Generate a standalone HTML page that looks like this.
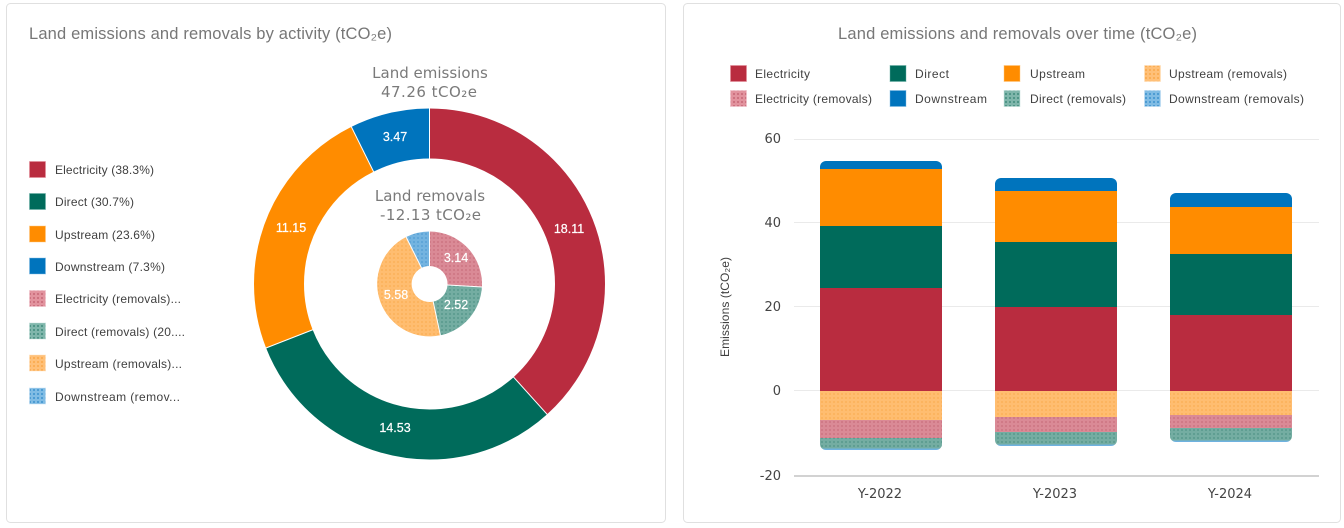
<!DOCTYPE html>
<html>
<head>
<meta charset="utf-8">
<style>
html,body{margin:0;padding:0;background:#fff;width:1344px;height:528px;overflow:hidden}
svg{display:block}
text{font-family:"Liberation Sans","DejaVu Sans",sans-serif}
.t{font-size:16.5px;fill:#777}
.l{font-size:12px;fill:#404040}
.d{font-family:"DejaVu Sans","Liberation Sans",sans-serif;font-size:15px;fill:#7a7a7a;text-anchor:middle}
.a{font-family:"DejaVu Sans","Liberation Sans",sans-serif;font-size:13px;fill:#444}
.w{font-size:12.5px;fill:#fff;text-anchor:middle;stroke:#fff;stroke-width:.2}
</style>
</head>
<body>
<svg width="1344" height="528" viewBox="0 0 1344 528" xmlns="http://www.w3.org/2000/svg">
<defs>
<pattern id="pe" width="4" height="4" patternUnits="userSpaceOnUse"><rect width="4" height="4" fill="#e2939e"/><rect x="1" y="1" width="2" height="2" fill="#cd7280"/></pattern>
<pattern id="pd" width="4" height="4" patternUnits="userSpaceOnUse"><rect width="4" height="4" fill="#7fb6ab"/><rect x="1" y="1" width="2" height="2" fill="#4f9587"/></pattern>
<pattern id="pu" width="4" height="4" patternUnits="userSpaceOnUse"><rect width="4" height="4" fill="#ffc078"/><rect x="1" y="1" width="2" height="2" fill="#fbae55"/></pattern>
<pattern id="pw" width="4" height="4" patternUnits="userSpaceOnUse"><rect width="4" height="4" fill="#80bce4"/><rect x="1" y="1" width="2" height="2" fill="#4d9cd3"/></pattern>
<pattern id="se" width="4" height="4" patternUnits="userSpaceOnUse"><rect width="4" height="4" fill="#da8a96"/><rect x="1" y="1" width="2" height="2" fill="#d07a87"/></pattern>
<pattern id="sd" width="4" height="4" patternUnits="userSpaceOnUse"><rect width="4" height="4" fill="#74ada2"/><rect x="1" y="1" width="2" height="2" fill="#5f9e92"/></pattern>
<pattern id="su" width="4" height="4" patternUnits="userSpaceOnUse"><rect width="4" height="4" fill="#ffbd70"/><rect x="1" y="1" width="2" height="2" fill="#fcb45f"/></pattern>
<pattern id="sw" width="4" height="4" patternUnits="userSpaceOnUse"><rect width="4" height="4" fill="#74b4e0"/><rect x="1" y="1" width="2" height="2" fill="#5fa6d8"/></pattern>
<clipPath id="c1"><rect x="820" y="161" width="122" height="289" rx="6"/></clipPath>
<clipPath id="c2"><rect x="995" y="178" width="122" height="268" rx="6"/></clipPath>
<clipPath id="c3"><rect x="1170" y="193" width="122" height="249" rx="6"/></clipPath>
</defs>

<rect x="6.5" y="3.5" width="659" height="519" rx="4" fill="#fff" stroke="#e0e0e0"/>
<rect x="683.5" y="3.5" width="657" height="519" rx="4" fill="#fff" stroke="#e0e0e0"/>

<text class="t" x="29" y="39" textLength="363" lengthAdjust="spacing">Land emissions and removals by activity (tCO₂e)</text>
<text class="t" x="838" y="39" textLength="359" lengthAdjust="spacing">Land emissions and removals over time (tCO₂e)</text>

<!-- left legend -->
<g stroke-opacity=".45" stroke-width="1">
<rect x="29.5" y="161.5" width="16" height="16" fill="#b92c3f" stroke="#e58a97"/>
<rect x="29.5" y="193.5" width="16" height="16" fill="#006b5b" stroke="#66b0a4"/>
<rect x="29.5" y="226" width="16" height="16" fill="#ff8c00" stroke="#ffc880"/>
<rect x="29.5" y="258" width="16" height="16" fill="#0074bd" stroke="#80bce4"/>
<rect x="29.5" y="290.5" width="16" height="16" fill="url(#pe)" stroke="#f2c4cb"/>
<rect x="29.5" y="323" width="16" height="16" fill="url(#pd)" stroke="#bcdcd5"/>
<rect x="29.5" y="355" width="16" height="16" fill="url(#pu)" stroke="#ffe0bb"/>
<rect x="29.5" y="388" width="16" height="16" fill="url(#pw)" stroke="#bcdcf2"/>
</g>
<text class="l" x="55" y="174" textLength="99">Electricity (38.3%)</text>
<text class="l" x="55" y="206" textLength="79">Direct (30.7%)</text>
<text class="l" x="55" y="239" textLength="100">Upstream (23.6%)</text>
<text class="l" x="55" y="271" textLength="110">Downstream (7.3%)</text>
<text class="l" x="55" y="303" textLength="126">Electricity (removals)...</text>
<text class="l" x="55" y="336" textLength="130">Direct (removals) (20....</text>
<text class="l" x="55" y="368" textLength="127">Upstream (removals)...</text>
<text class="l" x="55" y="401" textLength="125">Downstream (remov...</text>

<!-- outer donut -->
<g fill="none" stroke-width="50" transform="rotate(-90 429.5 284)">
<circle cx="429.5" cy="284" r="150.5" pathLength="47.26" stroke="#b92c3f" stroke-dasharray="18.11 29.15"/>
<circle cx="429.5" cy="284" r="150.5" pathLength="47.26" stroke="#006b5b" stroke-dasharray="14.53 32.73" stroke-dashoffset="-18.11"/>
<circle cx="429.5" cy="284" r="150.5" pathLength="47.26" stroke="#ff8c00" stroke-dasharray="11.15 36.11" stroke-dashoffset="-32.64"/>
<circle cx="429.5" cy="284" r="150.5" pathLength="47.26" stroke="#0074bd" stroke-dasharray="3.47 43.79" stroke-dashoffset="-43.79"/>
</g>
<g stroke="#fff" stroke-width="1">
<line x1="429.5" y1="159" x2="429.5" y2="107"/>
<line x1="513.3" y1="376.8" x2="547.9" y2="415.2"/>
<line x1="313.1" y1="329.6" x2="264.7" y2="348.5"/>
<line x1="373.8" y1="172.1" x2="350.7" y2="125.5"/>
</g>

<!-- inner donut -->
<path d="M429.5 231.5A52.5 52.5 0 0 1 481.9 286.9L447.5 285A18 18 0 0 0 429.5 266Z" fill="url(#se)"/>
<path d="M481.9 286.9A52.5 52.5 0 0 1 440.4 335.3L433.2 301.6A18 18 0 0 0 447.5 285Z" fill="url(#sd)"/>
<path d="M440.4 335.3A52.5 52.5 0 0 1 406.1 237L421.5 267.9A18 18 0 0 0 433.2 301.6Z" fill="url(#su)"/>
<path d="M406.1 237A52.5 52.5 0 0 1 429.5 231.5L429.5 266A18 18 0 0 0 421.5 267.9Z" fill="url(#sw)"/>
<g stroke="#fff" stroke-width="1">
<line x1="429.5" y1="266" x2="429.5" y2="231"/>
<line x1="447.5" y1="285" x2="482.4" y2="287"/>
<line x1="433.2" y1="301.6" x2="440.5" y2="335.8"/>
<line x1="421.5" y1="267.9" x2="405.9" y2="236.6"/>
</g>

<text class="d" x="430" y="78">Land emissions</text>
<text class="d" x="429" y="97" textLength="96">47.26 tCO₂e</text>
<text class="d" x="430" y="201">Land removals</text>
<text class="d" x="430.5" y="220" textLength="101">-12.13 tCO₂e</text>

<text class="w" x="569" y="233">18.11</text>
<text class="w" x="395" y="432">14.53</text>
<text class="w" x="291" y="232">11.15</text>
<text class="w" x="395" y="141">3.47</text>
<text class="w" x="456" y="262">3.14</text>
<text class="w" x="456" y="309">2.52</text>
<text class="w" x="396" y="299">5.58</text>

<!-- right legend -->
<g stroke-opacity=".45">
<rect x="730.5" y="65.5" width="16" height="16" fill="#b92c3f" stroke="#e58a97"/>
<rect x="890" y="65.5" width="16" height="16" fill="#006b5b" stroke="#66b0a4"/>
<rect x="1004" y="65.5" width="16" height="16" fill="#ff8c00" stroke="#ffc880"/>
<rect x="1144.5" y="65.5" width="16" height="16" fill="url(#pu)" stroke="#ffe0bb"/>
<rect x="730.5" y="90.5" width="16" height="16" fill="url(#pe)" stroke="#f2c4cb"/>
<rect x="890" y="90.5" width="16" height="16" fill="#0074bd" stroke="#80bce4"/>
<rect x="1004" y="90.5" width="16" height="16" fill="url(#pd)" stroke="#bcdcd5"/>
<rect x="1144.5" y="90.5" width="16" height="16" fill="url(#pw)" stroke="#bcdcf2"/>
</g>
<text class="l" x="755" y="78" textLength="55">Electricity</text>
<text class="l" x="915" y="78" textLength="34">Direct</text>
<text class="l" x="1030" y="78" textLength="55">Upstream</text>
<text class="l" x="1169" y="78" textLength="118">Upstream (removals)</text>
<text class="l" x="755" y="103" textLength="117">Electricity (removals)</text>
<text class="l" x="915" y="103" textLength="72">Downstream</text>
<text class="l" x="1030" y="103" textLength="96">Direct (removals)</text>
<text class="l" x="1169" y="103" textLength="135">Downstream (removals)</text>

<!-- grid -->
<g stroke="#eaeaea" stroke-width="1">
<line x1="794" y1="139.5" x2="1319" y2="139.5"/>
<line x1="794" y1="222.5" x2="1319" y2="222.5"/>
<line x1="794" y1="306.5" x2="1319" y2="306.5"/>
<line x1="794" y1="390.5" x2="1319" y2="390.5"/>
</g>
<line x1="794" y1="476" x2="1319" y2="476" stroke="#c4c4c4" stroke-width="1.4"/>

<text class="a" x="781" y="143" text-anchor="end">60</text>
<text class="a" x="781" y="227" text-anchor="end">40</text>
<text class="a" x="781" y="311" text-anchor="end">20</text>
<text class="a" x="781" y="395" text-anchor="end">0</text>
<text class="a" x="781" y="480" text-anchor="end">-20</text>
<text class="a" x="880" y="498" text-anchor="middle">Y-2022</text>
<text class="a" x="1055" y="498" text-anchor="middle">Y-2023</text>
<text class="a" x="1230" y="498" text-anchor="middle">Y-2024</text>
<text class="l" transform="translate(729 307) rotate(-90)" text-anchor="middle" textLength="100">Emissions (tCO₂e)</text>

<!-- bars -->
<g clip-path="url(#c1)">
<rect x="820" y="161" width="122" height="8" fill="#0074bd"/>
<rect x="820" y="169" width="122" height="57" fill="#ff8c00"/>
<rect x="820" y="226" width="122" height="62" fill="#006b5b"/>
<rect x="820" y="288" width="122" height="103" fill="#b92c3f"/>
<rect x="820" y="391" width="122" height="29" fill="url(#su)"/>
<rect x="820" y="420" width="122" height="18" fill="url(#se)"/>
<rect x="820" y="438" width="122" height="10.5" fill="url(#sd)"/>
<rect x="820" y="448.5" width="122" height="1.5" fill="#6fb2e0"/>
</g>
<g clip-path="url(#c2)">
<rect x="995" y="178" width="122" height="13" fill="#0074bd"/>
<rect x="995" y="191" width="122" height="51" fill="#ff8c00"/>
<rect x="995" y="242" width="122" height="65" fill="#006b5b"/>
<rect x="995" y="307" width="122" height="84" fill="#b92c3f"/>
<rect x="995" y="391" width="122" height="26" fill="url(#su)"/>
<rect x="995" y="417" width="122" height="15" fill="url(#se)"/>
<rect x="995" y="432" width="122" height="12.5" fill="url(#sd)"/>
<rect x="995" y="444.5" width="122" height="1.5" fill="#6fb2e0"/>
</g>
<g clip-path="url(#c3)">
<rect x="1170" y="193" width="122" height="14" fill="#0074bd"/>
<rect x="1170" y="207" width="122" height="47" fill="#ff8c00"/>
<rect x="1170" y="254" width="122" height="61" fill="#006b5b"/>
<rect x="1170" y="315" width="122" height="76" fill="#b92c3f"/>
<rect x="1170" y="391" width="122" height="24" fill="url(#su)"/>
<rect x="1170" y="415" width="122" height="13" fill="url(#se)"/>
<rect x="1170" y="428" width="122" height="12.5" fill="url(#sd)"/>
<rect x="1170" y="440.5" width="122" height="1.5" fill="#6fb2e0"/>
</g>
</svg>
</body>
</html>
